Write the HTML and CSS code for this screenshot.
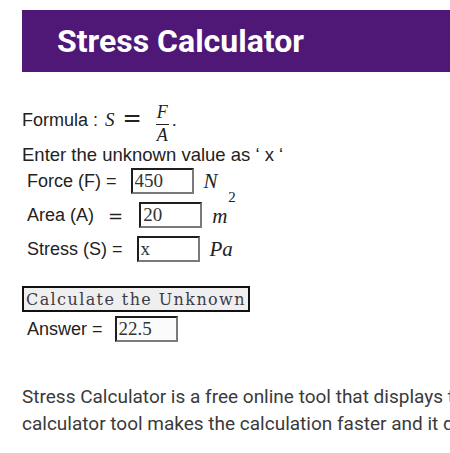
FILE: index.html
```html
<!DOCTYPE html>
<html lang="en">
<head>
  <meta charset="UTF-8">
  <meta name="viewport" content="width=device-width, initial-scale=1.0">
  <title>Stress Calculator</title>
  <link rel="stylesheet" href="styles.css">
</head>
<body>
  <div class="page">
    <!-- Title banner -->
    <div class="banner">
      <h1>Stress Calculator</h1>
    </div>

    <!-- Calculator widget -->
    <div class="calc">
      <p class="formula">Formula : <i class="var">S</i><span class="eq">=</span><span class="frac"><span class="num">F</span><span class="den">A</span></span>.</p>
      <p class="hint">Enter the unknown value as ‘ x ‘</p>

      <div class="row">
        <label for="force">Force (F) =</label>
        <input id="force" type="text" value="450">
        <span class="unit">N</span>
      </div>
      <div class="row">
        <label for="area">Area (A)</label>
        <span class="eq small">=</span>
        <input id="area" type="text" value="20">
        <span class="unit">m<sup>2</sup></span>
      </div>
      <div class="row">
        <label for="stress">Stress (S) =</label>
        <input id="stress" type="text" value="x">
        <span class="unit">Pa</span>
      </div>

      <button class="calc-btn" onclick="calculate()">Calculate the Unknown</button>

      <div class="row answer">
        <label for="answer">Answer =</label>
        <input id="answer" type="text" value="22.5" readonly>
      </div>
    </div>

    <p class="about">Stress Calculator is a free online tool that displays the stress when the force and area are given. BYJU'S online stress calculator tool makes the calculation faster and it displays the stress in a fraction of seconds.</p>
  </div>

  <script>
    // Solve S = F / A for whichever field holds "x"
    function calculate() {
      const f = document.getElementById("force").value.trim();
      const a = document.getElementById("area").value.trim();
      const s = document.getElementById("stress").value.trim();
      let result = "";
      if (s === "x") result = parseFloat(f) / parseFloat(a);
      else if (f === "x") result = parseFloat(s) * parseFloat(a);
      else if (a === "x") result = parseFloat(f) / parseFloat(s);
      document.getElementById("answer").value = result;
    }
  </script>
</body>
</html>
```

FILE: styles.css
```css
html {
  overflow-x: hidden;
}
body {
  margin: 0;
  padding: 0;
  background-color: #fff;
}
.page {
  width: 1020px;
  padding: 10px 0 0 22px;
}
.banner {
  height: 62px;
  background-color: #4f1877;
  padding-left: 35px;
  display: flex;
  align-items: center;
}
.banner h1 {
  margin: 0;
  color: #fff;
  font-family: Roboto, sans-serif;
  font-weight: 700;
  font-size: 32px;
}
.calc {
  font-family: "Liberation Sans", Arial, sans-serif;
  font-size: 18px;
  color: #222;
}
.formula {
  margin: 33px 0 0;
}
.var {
  font-family: "Liberation Serif", serif;
  font-size: 19px;
  margin-left: 2px;
}
.eq {
  font-family: "DejaVu Sans", sans-serif;
  font-size: 23px;
  margin: 0 14px 0 8px;
}
.eq.small {
  font-size: 18px;
  margin: 0 0 0 14px;
}
.frac {
  display: inline-block;
  text-align: center;
  vertical-align: -15px;
  margin-right: 3px;
  font-family: "Liberation Serif", serif;
  font-style: italic;
  font-size: 18px;
}
.frac span {
  display: block;
  line-height: 14px;
  padding: 0 1px;
}
.frac .num {
  padding-bottom: 5px;
  border-bottom: 1px solid #222;
}
.frac .den {
  padding-top: 3px;
}
.hint {
  margin: 2px 0 2px;
  font-size: 18.5px;
}
.row {
  display: flex;
  align-items: center;
  height: 26px;
  margin-bottom: 8px;
  padding-left: 5px;
}
.row input {
  width: 63px;
  height: 26px;
  box-sizing: border-box;
  margin-left: 14px;
  padding: 0 2px;
  border: 2px solid;
  border-color: #1e1e1e #7a7a7a #7a7a7a #1e1e1e;
  font-family: "Liberation Serif", serif;
  font-size: 19px;
  color: #333;
}
.eq.small + input {
  margin-left: 16px;
}
.unit {
  margin-left: 10px;
  font-family: "Liberation Serif", serif;
  font-style: italic;
  font-size: 21px;
}
.unit sup {
  position: relative;
  top: -13px;
  font-style: normal;
  font-size: 15px;
  margin-left: 1px;
}
.calc-btn {
  display: block;
  margin-top: 24px;
  height: 26px;
  padding: 0 2px;
  border: 2px solid #111;
  background-color: #efefef;
  font-family: "DejaVu Serif", serif;
  font-size: 16px;
  letter-spacing: 1.4px;
  color: #3b3b48;
  cursor: pointer;
}
.answer {
  margin-top: 4px;
}
.answer input {
  margin-left: 12px;
  background-color: #fbfbfb;
}
.about {
  margin: 41px 0 0;
  font-family: Roboto, sans-serif;
  font-size: 19px;
  line-height: 27px;
  color: #3a3a3a;
}
```
